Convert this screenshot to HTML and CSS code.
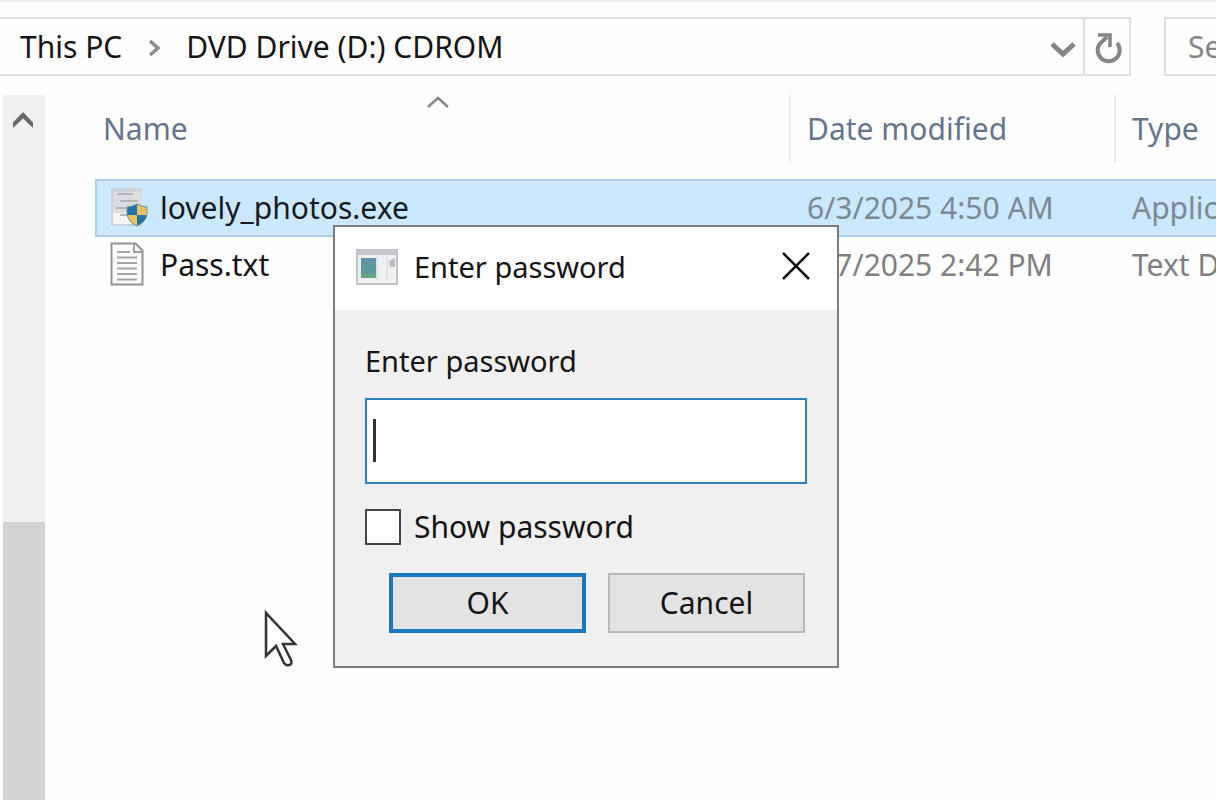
FILE: index.html
```html
<!DOCTYPE html>
<html lang="en">
<head>
<meta charset="utf-8">
<title>DVD Drive (D:) CDROM</title>
<link rel="stylesheet" href="styles.css">
</head>
<body>
<header class="toolbar">
  <nav class="address" aria-label="Address">
    <a class="crumb" href="#">This PC</a>
    <svg class="crumb-sep" width="16" height="20" viewBox="0 0 16 20" aria-hidden="true"><path d="M4 4l8 7-8 7" fill="none" stroke="#8a8a8a" stroke-width="3.500"/></svg>
    <a class="crumb" href="#">DVD Drive (D:) CDROM</a>
    <button class="tool history" aria-label="Previous locations"><svg width="28" height="24" viewBox="0 0 28 24"><path d="M4 9l11 10L26 9" fill="none" stroke="#858585" stroke-width="5"/></svg></button>
    <button class="tool refresh" aria-label="Refresh"><svg width="32" height="34" viewBox="0 0 32 34"><path d="M26 13A11 11 0 1 1 9 13.500L16 7" fill="none" stroke="#858585" stroke-width="4"/><path d="M7 5h12v12" fill="none" stroke="#858585" stroke-width="3.500"/></svg></button>
  </nav>
  <input class="search" type="text" placeholder="Search" aria-label="Search">
</header>
<main class="content">
  <div class="scrollbar">
    <button class="scroll-up" aria-label="Scroll up"><svg width="22" height="20" viewBox="0 0 22 20"><path d="M0 12.500L10 2l10 10.500v5.500L10 8.500 0 18z" fill="#686868"/></svg></button>
    <div class="thumb"></div>
  </div>
  <section class="files">
    <table class="list">
      <colgroup><col><col class="col-date"><col class="col-type"></colgroup>
      <thead>
        <tr>
          <th scope="col">Name<svg class="sort" width="32" height="14" viewBox="0 0 32 14" aria-hidden="true"><path d="M2 12L12 3l10 9" fill="none" stroke="#888" stroke-width="2.500"/></svg></th>
          <th scope="col">Date modified</th>
          <th scope="col">Type</th>
        </tr>
      </thead>
      <tbody>
        <tr class="selected">
          <td><span class="file"><svg width="38" height="42" viewBox="0 0 38 42" aria-hidden="true">
            <path d="M2 1h30v37H2z" fill="#dcdddf"/><path d="M2 1h30v4H2z" fill="#cfd3d7"/><path d="M3 26h19v12H3z" fill="#f5f5f4"/>
            <path d="M7 7h16M10 14h18M6 21h11M10 28h7" stroke="#b3b5b8" stroke-width="2"/><path d="M2 1v37h30" fill="none" stroke="#c7d2dc" stroke-width="2"/>
            <path d="M27 17q5 3 10 3v7q-1 8-10 12-9-4-10-12v-7q5 0 10-3z" fill="#e7c35e"/><path d="M27 17v11H17v-8q5 0 10-3zM27 28h10q-1 7-10 11z" fill="#2473ab"/><path d="M27 17q5 3 10 3v7q-1 8-10 12-9-4-10-12v-7q5 0 10-3z" fill="none" stroke="#6690a6" stroke-width="1"/>
          </svg>lovely_photos.exe</span></td>
          <td>6/3/2025 4:50 AM</td>
          <td>Application</td>
        </tr>
        <tr>
          <td><span class="file"><svg width="38" height="46" viewBox="0 0 38 46" aria-hidden="true">
            <path d="M1.500 1.500h24l7 7v34h-31z" fill="#fcfcfc" stroke="#929292" stroke-width="2"/><path d="M24 2v8h8" fill="none" stroke="#a1a1a1" stroke-width="2"/>
            <path d="M7 10h13M7 15.500h20M7 21h20M7 26.500h20M7 32h20M7 37.500h20" stroke="#a6a6a6" stroke-width="2"/>
          </svg>Pass.txt</span></td>
          <td>6/7/2025 2:42 PM</td>
          <td>Text Document</td>
        </tr>
      </tbody>
    </table>
  </section>
</main>

<form class="dialog" role="dialog" aria-labelledby="dialog-title">
  <div class="titlebar">
    <svg width="42" height="36" viewBox="0 0 42 36" aria-hidden="true"><path d="M1 1h40v34H1z" fill="#eef0f1" stroke="#c0c3c6" stroke-width="2"/><path d="M1 1h40v5H1z" fill="#c5c8cc"/><path d="M5 9h15v20H5z" fill="#5b9c9b"/><path d="M5 9h15v5H5z" fill="#6292a6"/><path d="M5 25h15v4H5z" fill="#68a386"/><path d="M20 8h2v23h-2zM30 8h2v23h-2z" fill="#dfe3e6"/><path d="M33 12l6-3v9h-5z" fill="#b8bec4"/></svg>
    <h1 class="title" id="dialog-title">Enter password</h1>
    <button class="close" type="button" aria-label="Close"><svg width="30" height="30" viewBox="0 0 30 30"><path d="M2 1l26 26M28 1L2 27" stroke="#111" stroke-width="2.500"/></svg></button>
  </div>
  <div class="dialog-body">
    <label class="prompt" for="password">Enter password</label>
    <div class="field"><input class="password" id="password" type="password"><span class="caret"></span></div>
    <label class="show"><input class="check" type="checkbox">Show password</label>
    <div class="actions">
      <button class="btn primary" type="submit">OK</button>
      <button class="btn" type="button">Cancel</button>
    </div>
  </div>
</form>
<svg class="pointer" width="36" height="60" viewBox="0 0 36 60" aria-hidden="true"><path d="M3 5v43l10-10 8 17q3 4 7 1 1-2 0-4L20 36h12z" fill="#fff" stroke="#333" stroke-width="2.500"/></svg>
</body>
</html>
```
FILE: styles.css
```css
* { box-sizing: border-box; }

body {
  margin: 0;
  height: 100vh;
  display: flex;
  flex-direction: column;
  position: relative;
  overflow: hidden;
  background: #fefefe;
  border-top: 2px solid #eeeeee;
  color: #151515;
  font: 30px/40px "Noto Sans", "Open Sans", sans-serif;
}

button, input { font: inherit; color: inherit; }
button { padding: 0; border: 0; background: none; }
svg { display: block; flex: none; }

.toolbar {
  display: flex;
  gap: 33px;
  padding-top: 15px;
}

.address {
  flex: 1;
  min-width: 0;
  display: flex;
  align-items: center;
  height: 59px;
  padding-left: 20px;
  border: 2px solid #dedede;
  border-left: 0;
}

.crumb { color: inherit; text-decoration: none; white-space: nowrap; }
.crumb-sep { margin: 0 24px; }

.tool {
  height: 100%;
  display: flex;
  align-items: center;
  justify-content: center;
}
.history { width: 42px; margin-left: auto; }
.refresh { width: 46px; border-left: 2px solid #dedede; }

.search {
  width: 52px;
  height: 59px;
  padding: 0 0 0 22px;
  border: 2px solid #dedede;
  border-right: 0;
  border-radius: 0;
  background: #fefefe;
  outline: 0;
}
.search::placeholder { color: #858585; opacity: 1; }

.content {
  flex: 1;
  min-height: 0;
  display: flex;
  gap: 50px;
  padding: 19px 0 0 3px;
}

.scrollbar {
  flex: none;
  width: 42px;
  display: flex;
  flex-direction: column;
  background: #f0f0f0;
}
.scroll-up { height: 50px; display: flex; align-items: center; justify-content: center; }
.thumb { flex: 1; margin-top: 377px; background: #d2d2d2; }

.files { flex: 1; min-width: 0; overflow: hidden; }

.list {
  width: 100%;
  table-layout: fixed;
  border-collapse: separate;
  border-spacing: 0;
  white-space: nowrap;
}
.col-date { width: 325px; }
.col-type { width: 102px; }

.list th, .list td {
  padding: 0 0 0 18px;
  overflow: hidden;
  text-align: left;
}
.list th {
  position: relative;
  height: 68px;
  padding-left: 16px;
  color: #66758c;
  font-weight: 400;
}
.list th:first-child { padding-left: 8px; }
.list th + th { border-left: 2px solid #ebebeb; }
.sort { position: absolute; top: 0; left: 50%; transform: translateX(-50%); }

.list tbody::before { content: ""; display: block; height: 16px; }
.list td { height: 56px; color: #808080; }
.list td:first-child { padding-left: 15px; color: #151515; }
.selected td {
  height: 58px;
  background: #cce8ff;
  border: 2px solid #a8cfec;
  border-width: 2px 0;
}
.list .selected td { height: 58px; color: #7b8995; }
.list .selected td:first-child { padding-left: 13px; border-left-width: 2px; color: #151b24; }
.file { display: flex; align-items: center; gap: 12px; }

.dialog {
  position: absolute;
  top: 223px;
  left: 333px;
  width: 506px;
  border: 2px solid #7c7c7c;
  background: #f0f0f0;
}

.titlebar {
  height: 83px;
  display: flex;
  align-items: center;
  gap: 16px;
  padding: 0 26px 4px 21px;
  background: #fff;
}
.title { margin: 0; flex: 1; font-size: 29px; line-height: 40px; font-weight: 400; }
.close { display: flex; }

.dialog-body {
  display: flex;
  flex-direction: column;
  padding: 31px 30px 33px;
}
.prompt { margin-bottom: 17px; font-size: 29px; }

.field { position: relative; display: flex; }
.password {
  flex: 1;
  min-width: 0;
  height: 86px;
  padding: 0 8px;
  border: 2px solid #2e82bb;
  border-radius: 0;
  background: #fff;
  outline: 0;
}
.caret { position: absolute; top: 21px; left: 8px; width: 3px; height: 43px; background: #333; }

.show { display: flex; align-items: center; gap: 13px; margin-top: 23px; }
.check {
  appearance: none;
  width: 36px;
  height: 36px;
  margin: 0;
  border: 2px solid #444;
  background: #fff;
}

.actions {
  display: grid;
  grid-template-columns: 1fr 1fr;
  gap: 22px;
  margin-top: 26px;
  padding: 0 2px 0 24px;
}
.btn {
  height: 60px;
  border: 2px solid #b9b9b9;
  background: #e3e3e3;
}
.primary { border: 4px solid #1878c0; }

.pointer { position: absolute; top: 606px; left: 263px; }
```
